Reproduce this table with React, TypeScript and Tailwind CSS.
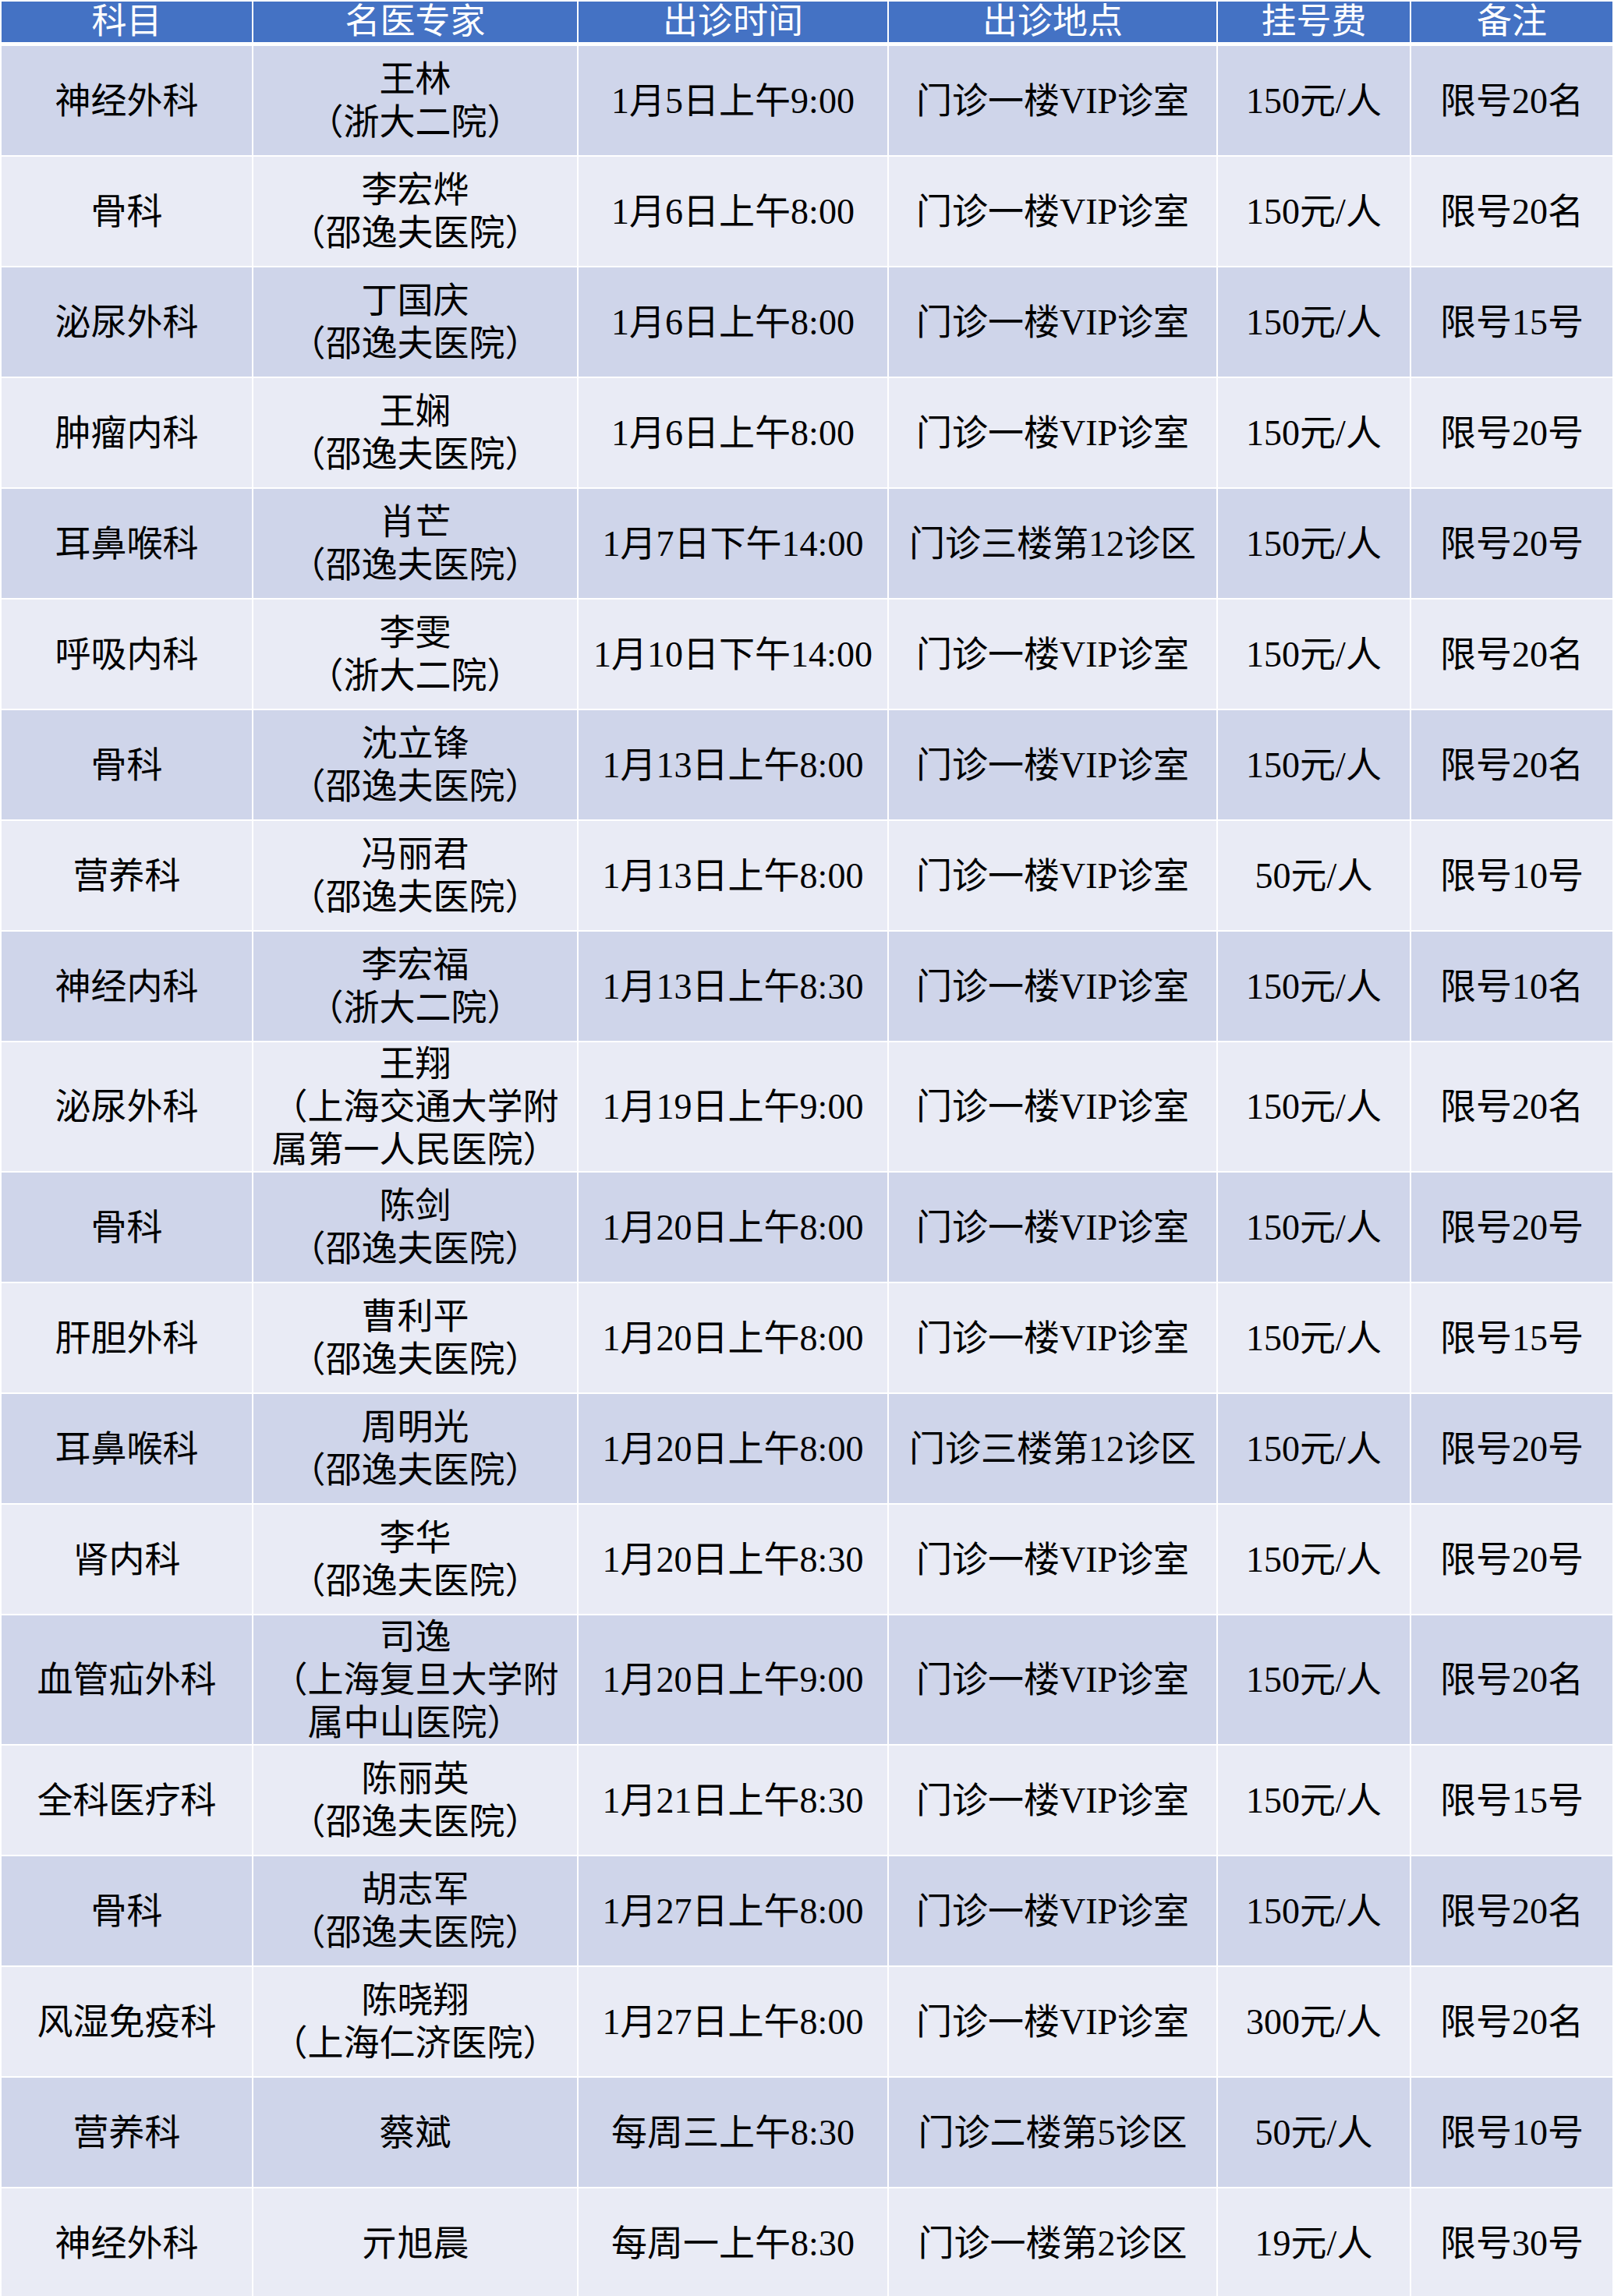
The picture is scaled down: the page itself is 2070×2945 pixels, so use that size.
const headers = ["科目", "名医专家", "出诊时间", "出诊地点", "挂号费", "备注"];

type Row = {
  dept: string;
  doctor: string[];
  time: string;
  place: string;
  fee: string;
  note: string;
};

const rows: Row[] = [
  { dept: "神经外科", doctor: ["王林", "（浙大二院）"], time: "1月5日上午9:00", place: "门诊一楼VIP诊室", fee: "150元/人", note: "限号20名" },
  { dept: "骨科", doctor: ["李宏烨", "（邵逸夫医院）"], time: "1月6日上午8:00", place: "门诊一楼VIP诊室", fee: "150元/人", note: "限号20名" },
  { dept: "泌尿外科", doctor: ["丁国庆", "（邵逸夫医院）"], time: "1月6日上午8:00", place: "门诊一楼VIP诊室", fee: "150元/人", note: "限号15号" },
  { dept: "肿瘤内科", doctor: ["王娴", "（邵逸夫医院）"], time: "1月6日上午8:00", place: "门诊一楼VIP诊室", fee: "150元/人", note: "限号20号" },
  { dept: "耳鼻喉科", doctor: ["肖芒", "（邵逸夫医院）"], time: "1月7日下午14:00", place: "门诊三楼第12诊区", fee: "150元/人", note: "限号20号" },
  { dept: "呼吸内科", doctor: ["李雯", "（浙大二院）"], time: "1月10日下午14:00", place: "门诊一楼VIP诊室", fee: "150元/人", note: "限号20名" },
  { dept: "骨科", doctor: ["沈立锋", "（邵逸夫医院）"], time: "1月13日上午8:00", place: "门诊一楼VIP诊室", fee: "150元/人", note: "限号20名" },
  { dept: "营养科", doctor: ["冯丽君", "（邵逸夫医院）"], time: "1月13日上午8:00", place: "门诊一楼VIP诊室", fee: "50元/人", note: "限号10号" },
  { dept: "神经内科", doctor: ["李宏福", "（浙大二院）"], time: "1月13日上午8:30", place: "门诊一楼VIP诊室", fee: "150元/人", note: "限号10名" },
  { dept: "泌尿外科", doctor: ["王翔", "（上海交通大学附", "属第一人民医院）"], time: "1月19日上午9:00", place: "门诊一楼VIP诊室", fee: "150元/人", note: "限号20名" },
  { dept: "骨科", doctor: ["陈剑", "（邵逸夫医院）"], time: "1月20日上午8:00", place: "门诊一楼VIP诊室", fee: "150元/人", note: "限号20号" },
  { dept: "肝胆外科", doctor: ["曹利平", "（邵逸夫医院）"], time: "1月20日上午8:00", place: "门诊一楼VIP诊室", fee: "150元/人", note: "限号15号" },
  { dept: "耳鼻喉科", doctor: ["周明光", "（邵逸夫医院）"], time: "1月20日上午8:00", place: "门诊三楼第12诊区", fee: "150元/人", note: "限号20号" },
  { dept: "肾内科", doctor: ["李华", "（邵逸夫医院）"], time: "1月20日上午8:30", place: "门诊一楼VIP诊室", fee: "150元/人", note: "限号20号" },
  { dept: "血管疝外科", doctor: ["司逸", "（上海复旦大学附", "属中山医院）"], time: "1月20日上午9:00", place: "门诊一楼VIP诊室", fee: "150元/人", note: "限号20名" },
  { dept: "全科医疗科", doctor: ["陈丽英", "（邵逸夫医院）"], time: "1月21日上午8:30", place: "门诊一楼VIP诊室", fee: "150元/人", note: "限号15号" },
  { dept: "骨科", doctor: ["胡志军", "（邵逸夫医院）"], time: "1月27日上午8:00", place: "门诊一楼VIP诊室", fee: "150元/人", note: "限号20名" },
  { dept: "风湿免疫科", doctor: ["陈晓翔", "（上海仁济医院）"], time: "1月27日上午8:00", place: "门诊一楼VIP诊室", fee: "300元/人", note: "限号20名" },
  { dept: "营养科", doctor: ["蔡斌"], time: "每周三上午8:30", place: "门诊二楼第5诊区", fee: "50元/人", note: "限号10号" },
  { dept: "神经外科", doctor: ["亓旭晨"], time: "每周一上午8:30", place: "门诊一楼第2诊区", fee: "19元/人", note: "限号30号" },
];

const cols = "grid grid-cols-[321px_415px_396px_420px_246px_258px] gap-[2px]";

function Cell({ children, light }: { children: React.ReactNode; light: boolean }) {
  return (
    <div
      className={`flex flex-col items-center justify-center text-center whitespace-nowrap ${
        light ? "bg-[#e9ebf5]" : "bg-[#cfd5ea]"
      }`}
    >
      {children}
    </div>
  );
}

export default function App() {
  return (
    <div
      className="w-[2070px] bg-white p-[2px] text-[46px] leading-[55px] text-black"
      style={{ fontFamily: '"Liberation Serif", "Noto Sans CJK SC", serif' }}
    >
      {/* header */}
      <div className={cols}>
        {headers.map((h) => (
          <div
            key={h}
            className="flex h-[52px] items-center justify-center bg-[#4472c4] text-[45px] leading-[52px] text-white"
          >
            {h}
          </div>
        ))}
      </div>

      {/* body */}
      <div className={`${cols} mt-[5px]`}>
        {rows.map((r, i) => {
          const light = i % 2 === 1;
          const tall = r.doctor.length > 2;
          return [
            <Cell key={`${i}-a`} light={light}>
              <div className={tall ? "h-[163px] flex items-center" : "h-[140px] flex items-center"}>
                {r.dept}
              </div>
            </Cell>,
            <Cell key={`${i}-b`} light={light}>
              {r.doctor.map((line) => (
                <div key={line}>{line}</div>
              ))}
            </Cell>,
            <Cell key={`${i}-c`} light={light}>
              {r.time}
            </Cell>,
            <Cell key={`${i}-d`} light={light}>
              {r.place}
            </Cell>,
            <Cell key={`${i}-e`} light={light}>
              {r.fee}
            </Cell>,
            <Cell key={`${i}-f`} light={light}>
              {r.note}
            </Cell>,
          ];
        })}
      </div>
    </div>
  );
}
